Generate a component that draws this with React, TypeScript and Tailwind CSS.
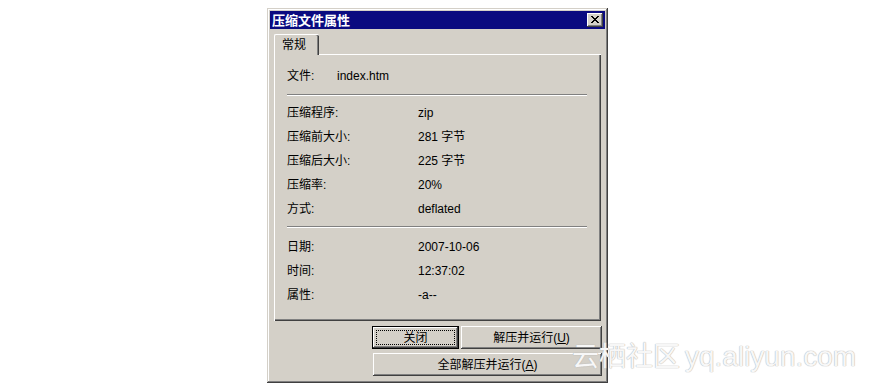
const rowsA = [
  { label: "压缩程序:", value: "zip" },
  { label: "压缩前大小:", value: "281 字节" },
  { label: "压缩后大小:", value: "225 字节" },
  { label: "压缩率:", value: "20%" },
  { label: "方式:", value: "deflated" },
];

const rowsB = [
  { label: "日期:", value: "2007-10-06" },
  { label: "时间:", value: "12:37:02" },
  { label: "属性:", value: "-a--" },
];

const raised =
  "shadow-[inset_-1px_-1px_0_#404040,inset_1px_1px_0_#ffffff,inset_-2px_-2px_0_#808080,inset_2px_2px_0_#d4d0c8]";

function Row({ label, value }: { label: string; value: string }) {
  return (
    <div className="flex h-[24px] items-center">
      <span className="w-[131px] shrink-0">{label}</span>
      <span>{value}</span>
    </div>
  );
}

function Separator() {
  return <div className="h-[2px] w-[300px] border-t border-b border-t-[#808080] border-b-white" />;
}

function Button({ children, width, isDefault }: { children: React.ReactNode; width: string; isDefault?: boolean }) {
  if (isDefault) {
    return (
      <button className={`${width} h-[23px] border border-black bg-[#d4d0c8] p-0`}>
        <div className={`flex h-full w-full items-center justify-center p-[3px] ${raised}`}>
          <div className="flex h-full w-full items-center justify-center border border-dotted border-black">
            {children}
          </div>
        </div>
      </button>
    );
  }
  return (
    <button className={`${width} flex h-[23px] items-center justify-center bg-[#d4d0c8] ${raised}`}>
      {children}
    </button>
  );
}

export default function App() {
  return (
    <div
      className="relative h-[385px] w-[869px] overflow-hidden bg-white pl-[267px] pt-[8px] text-[12px] text-black"
      style={{ fontFamily: '"Liberation Sans", "Noto Sans CJK SC", sans-serif' }}
    >
      <div className="flex h-[375px] w-[341px] flex-col bg-[#d4d0c8] p-[3px] shadow-[inset_-1px_-1px_0_#404040,inset_1px_1px_0_#d4d0c8,inset_-2px_-2px_0_#808080,inset_2px_2px_0_#ffffff]">
        {/* title bar */}
        <div className="flex h-[18px] items-center justify-between bg-[#0a0a80] pl-[2px] pr-[2px]">
          <span className="text-[13px] font-bold leading-none text-white">压缩文件属性</span>
          <button className={`flex h-[14px] w-[16px] items-center justify-center bg-[#d4d0c8] ${raised}`}>
            <svg width="8" height="7" viewBox="0 0 8 7" shapeRendering="crispEdges" className="-mt-px">
              <path
                fill="#000"
                d="M0 0h2v1H0zM6 0h2v1H6zM1 1h2v1H1zM5 1h2v1H5zM2 2h4v1H2zM3 3h2v1H3zM2 4h4v1H2zM1 5h2v1H1zM5 5h2v1H5zM0 6h2v1H0zM6 6h2v1H6z"
              />
            </svg>
          </button>
        </div>

        {/* tabs + panel */}
        <div className="ml-[4px] mt-[5px] w-[327px]">
          <div className="relative z-10 -mb-[1px] flex h-[21px] w-[45px] items-center rounded-t-[2px] border-l border-t border-white bg-[#d4d0c8] pl-[7px] shadow-[inset_-1px_0_0_#404040,inset_-2px_0_0_#808080]">
            常规
          </div>
          <div className="h-[267px] border-l border-t border-white pl-[12px] pt-[9px] shadow-[inset_-1px_-1px_0_#404040,inset_-2px_-2px_0_#808080]">
            <div className="flex h-[24px] items-center">
              <span className="w-[50px] shrink-0">文件:</span>
              <span>index.htm</span>
            </div>
            <div className="mt-[6px]">
              <Separator />
            </div>
            <div className="mt-[5px]">
              {rowsA.map((r) => (
                <Row key={r.label} {...r} />
              ))}
            </div>
            <div className="mt-[5px]">
              <Separator />
            </div>
            <div className="mt-[7px]">
              {rowsB.map((r) => (
                <Row key={r.label} {...r} />
              ))}
            </div>
          </div>
        </div>

        {/* buttons */}
        <div className="mr-[3px] mt-[5px] flex flex-col items-end gap-[4px]">
          <div className="flex gap-[2px]">
            <Button width="w-[87px]" isDefault>
              关闭
            </Button>
            <Button width="w-[141px]">
              解压并运行(<span className="underline">U</span>)
            </Button>
          </div>
          <Button width="w-[229px]">
            全部解压并运行(<span className="underline">A</span>)
          </Button>
        </div>
      </div>

      {/* watermark */}
      <div className="absolute left-[572px] top-[343px] flex items-baseline whitespace-nowrap leading-none text-white/90 [text-shadow:0_0_1px_#b0b0b0,0_0_1px_#b0b0b0]">
        <span className="text-[27px]">云栖社区</span>
        <span className="ml-[5px] text-[28px]">yq.aliyun.com</span>
      </div>
    </div>
  );
}
